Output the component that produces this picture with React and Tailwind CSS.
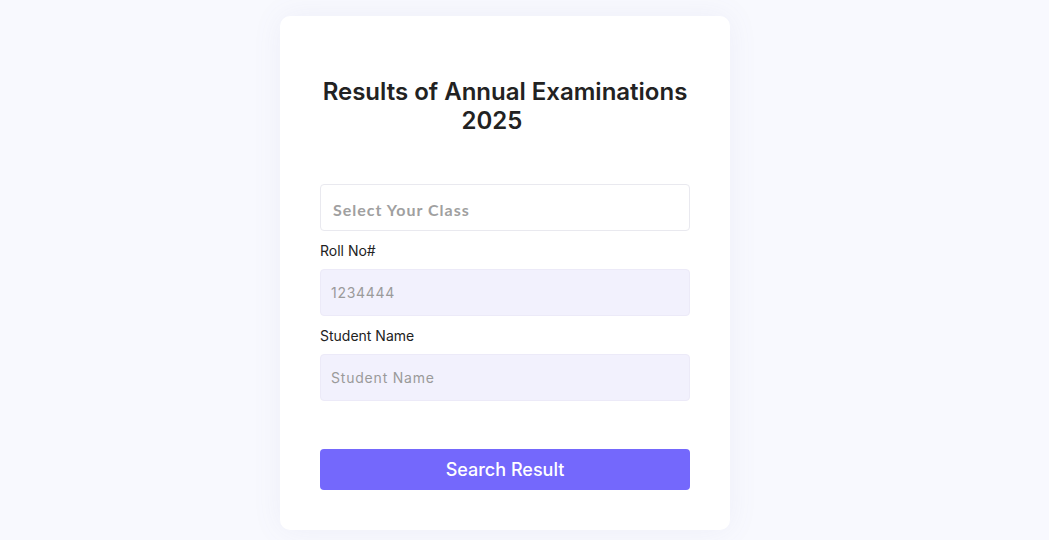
import React from "react";

export default function App() {
  return (
    <div className="min-h-[540px] w-full bg-[#f8f9fe] pl-[280px] pt-4" style={{ fontFamily: "Inter, 'Noto Sans', sans-serif" }}>
      <div className="w-[450px] rounded-[10px] bg-white px-10 pt-[61px] pb-10 shadow-[0_0_30px_rgba(120,120,180,0.08)]">
        <h1 className="text-center text-[24px] font-semibold leading-[29px] text-[#222]">
          Results of Annual Examinations
          <br />
          2025<span className="inline-block w-[26px]"></span>
        </h1>
        <div className="mt-[49px] flex h-[47px] items-center rounded-[4px] border border-[#e9e9ef] bg-white px-3 pt-1 text-[16px] font-bold tracking-[1px] text-[#a0a0a0]" style={{ fontFamily: "Lato, sans-serif" }}>
          Select Your Class
        </div>
        <label className="mt-[10px] block text-[14px] leading-[20px] text-[#222]">Roll No#</label>
        <div className="mt-2 flex h-[47px] items-center rounded-[4px] border border-[#eceaf8] bg-[#f2f1fd] px-[10px] text-[14px] tracking-[0.7px] text-[#9a9a9a]">
          1234444
        </div>
        <label className="mt-[10px] block text-[14px] leading-[20px] text-[#222]">Student Name</label>
        <div className="mt-2 flex h-[47px] items-center rounded-[4px] border border-[#eceaf8] bg-[#f2f1fd] px-[10px] text-[14px] tracking-[0.8px] text-[#9a9a9a]">
          Student Name
        </div>
        <button className="mt-12 flex h-[41px] w-full items-center justify-center rounded-[4px] bg-[#7468fc] text-[18px] font-medium text-white">
          Search Result
        </button>
      </div>
    </div>
  );
}
